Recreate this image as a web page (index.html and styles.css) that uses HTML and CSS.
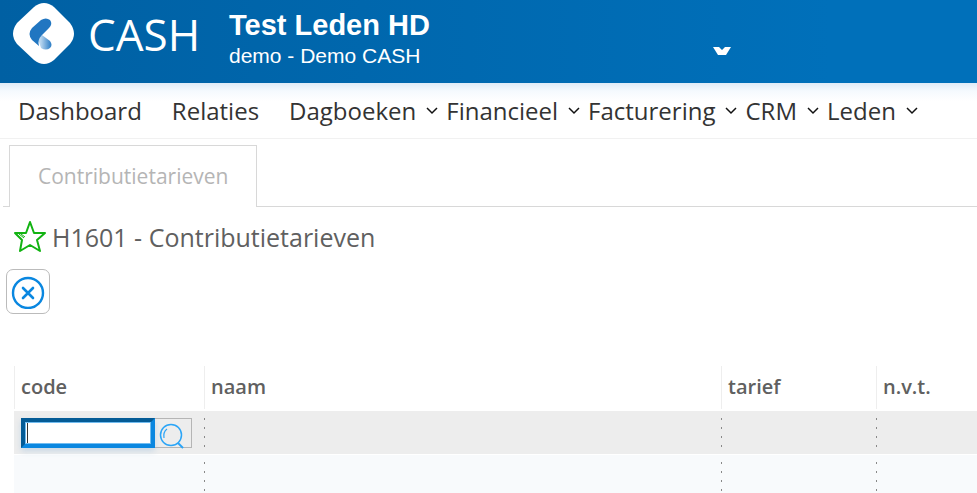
FILE: index.html
```
<!DOCTYPE html>
<html lang="nl">
	<head>
		<meta charset="UTF-8">
		<title>CASH - Contributietarieven</title>
		<link rel="stylesheet" href="styles.css">
	</head>
	<body>
		<header id="top">
			<a class="logo" href="#">
				<svg width="62" height="62" viewBox="0 0 62 62">
					<defs>
						<linearGradient id="fade" x1="0" y1="0" x2="1" y2="0">
							<stop offset="0.2" stop-color="#b9d6ef"/>
							<stop offset="1" stop-color="#2a7cc5"/>
						</linearGradient>
					</defs>
					<path fill="#fff" d="M21 4Q31-4 41 4L57 20Q65 31 57 41L41 57Q31 65 21 57L4 41Q-4 31 4 20Z"/>
					<path fill="url(#fade)" d="M25 36L29 32L37 38Q40 42 37 45Q33 48 28 45Z"/>
					<path fill="#2176c1" d="M28 17Q33 14 37 17Q40 21 36 25L29 32Q24 37 26 43L19 37Q14 31 19 25Z"/>
				</svg>
				<span>CASH</span>
			</a>
			<div class="admin">
				<h1>Test Leden HD</h1>
				<p>demo - Demo CASH</p>
			</div>
			<button class="open" type="button" aria-label="Administratie kiezen">
				<svg width="18" height="8" viewBox="0 0 18 8"><path fill="#fff" d="M0 0H6L9 3L12 0H18L13 8H5Z"/></svg>
			</button>
		</header>
		<nav>
			<a href="#">Dashboard</a>
			<a href="#">Relaties</a>
			<a class="sub" href="#">Dagboeken<svg width="12" height="8" viewBox="0 0 12 8"><path d="M1 1L6 6L11 1"/></svg></a>
			<a class="sub" href="#">Financieel<svg width="12" height="8" viewBox="0 0 12 8"><path d="M1 1L6 6L11 1"/></svg></a>
			<a class="sub" href="#">Facturering<svg width="12" height="8" viewBox="0 0 12 8"><path d="M1 1L6 6L11 1"/></svg></a>
			<a class="sub" href="#">CRM<svg width="12" height="8" viewBox="0 0 12 8"><path d="M1 1L6 6L11 1"/></svg></a>
			<a class="sub" href="#">Leden<svg width="12" height="8" viewBox="0 0 12 8"><path d="M1 1L6 6L11 1"/></svg></a>
		</nav>
		<div class="tabs">
			<a class="selected" href="#">Contributietarieven</a>
		</div>
		<main>
			<div class="title">
				<svg width="34" height="34" viewBox="0 0 34 34" fill="none" stroke="#12b312" stroke-width="2" stroke-linejoin="round">
					<path d="M17 2L21 13L32 13L24 20L27 31L17 25L7 31L9 20L2 13L13 13Z"/>
					<path stroke-width="1" d="M6 14L11 18M8 14L12 17"/>
				</svg>
				<h2>H1601 - Contributietarieven</h2>
			</div>
			<button class="close" type="button" aria-label="Sluiten">
				<svg width="34" height="34" viewBox="0 0 34 34" fill="none" stroke="#0a87e0" stroke-linecap="round">
					<circle cx="17" cy="18" r="15" stroke-width="2.4"/>
					<path stroke-width="2.6" d="M12 13L22 23M22 13L12 23"/>
				</svg>
			</button>
			<table>
				<colgroup>
					<col class="code">
					<col class="naam">
					<col class="tarief">
					<col>
				</colgroup>
				<thead>
					<tr>
						<th><label for="code">code</label></th>
						<th>naam</th>
						<th>tarief</th>
						<th>n.v.t.</th>
					</tr>
				</thead>
				<tbody>
					<tr class="active">
						<td>
							<div class="search">
								<input id="code" type="text" autofocus>
								<button type="button" aria-label="Zoeken">
									<svg width="26" height="26" viewBox="0 0 26 26" fill="none" stroke="#2ba5f7">
										<circle cx="12" cy="12" r="10.5" stroke-width="1.5"/>
										<path stroke-width="1.2" d="M5 15Q4 9 8 6"/>
										<path stroke-width="2" d="M19 20L24 25"/>
									</svg>
								</button>
							</div>
						</td>
						<td></td>
						<td></td>
						<td></td>
					</tr>
					<tr>
						<td></td>
						<td></td>
						<td></td>
						<td></td>
					</tr>
				</tbody>
			</table>
		</main>
	</body>
</html>
```
FILE: styles.css
```
*{padding: 0;margin: 0;box-sizing: border-box;}
html{height: 100%;overflow: hidden;}
body{font-family: "Open Sans","Noto Sans",sans-serif;color: #333;background: #fff;}
a{text-decoration: none;color: inherit;}
button{background: none;border: 0;cursor: pointer;}
svg{display: block;}

#top{display: flex;height: 83px;padding-left: 13px;background: linear-gradient(90deg,#0060a3,#0070ba 85%);color: #fff;}
.logo{display: flex;gap: 13px;width: 216px;padding-top: 3px;font-size: 44px;line-height: 62px;}
.admin{width: 484px;padding-top: 8px;font-family: "Liberation Sans",Arial,sans-serif;}
.admin h1{font-size: 29px;line-height: 34px;}
.admin p{font-size: 21px;line-height: 28px;}
.open{align-self: flex-start;padding-top: 47px;}

nav{display: flex;height: 56px;padding-left: 18px;border-bottom: 1px solid #f1f1f1;background: linear-gradient(#deebf7,#f5fafe 8px,#fff 18px);font-size: 24px;line-height: 56px;}
nav a{padding-right: 30px;white-space: nowrap;}
nav .sub{display: flex;align-items: center;gap: 10px;padding-right: 8px;}
nav svg{fill: none;stroke: #111;stroke-width: 1.5;}

.tabs{display: flex;height: 68px;margin-left: 3px;padding: 6px 6px 0;border-bottom: 1px solid #d8d8d8;}
.tabs .selected{height: 62px;padding: 0 28px;border: 1px solid #d8d8d8;border-bottom: 0;background: #fff;color: #b5b5b5;font-size: 21px;line-height: 60px;}

main{padding-left: 6px;color: #606060;}
.title{display: flex;align-items: center;gap: 5px;height: 62px;padding: 0 0 2px 7px;}
.title h2{font-size: 25px;font-weight: 400;}
.close{display: block;width: 44px;height: 45px;padding: 0 4px;border: 1px solid #bbb;border-radius: 7px;}

table{width: calc(100% - 8px);margin: 52px 0 0 8px;border-spacing: 0;table-layout: fixed;}
.code{width: 190px;}
.naam{width: 517px;}
.tarief{width: 155px;}
th{height: 45px;padding: 0 7px 4px;background: linear-gradient(#eee,#eee) 0 0/1px 43px no-repeat;text-align: left;font-size: 20px;font-weight: 600;}
td{height: 44px;padding: 0 7px;border-bottom: 1px solid #fff;background: #f8fafc;}
.active td{background-color: #ededed;}
td + td{background-image: linear-gradient(#888 2px,transparent 2px);background-position: 0 7px;background-size: 1px 9px;background-repeat: repeat-y;}
.search{display: flex;align-items: center;width: 171px;}
/* thin dark bar at the left is the text cursor */
.search input{width: 134px;height: 30px;border: 4px solid #0a87e0;border-top-color: #045b96;border-left-color: #045b96;outline: 0;background: linear-gradient(#333,#333) 2px 0/1px 100% no-repeat #fff;box-shadow: inset 0 0 0 1px #71bcf0,0 3px 6px #c8d8e6;font-size: 20px;caret-color: transparent;}
.search button{flex: 1;height: 30px;padding: 4px 0 0 4px;border: 1px solid #b5b5b5;border-left: 0;}
```
